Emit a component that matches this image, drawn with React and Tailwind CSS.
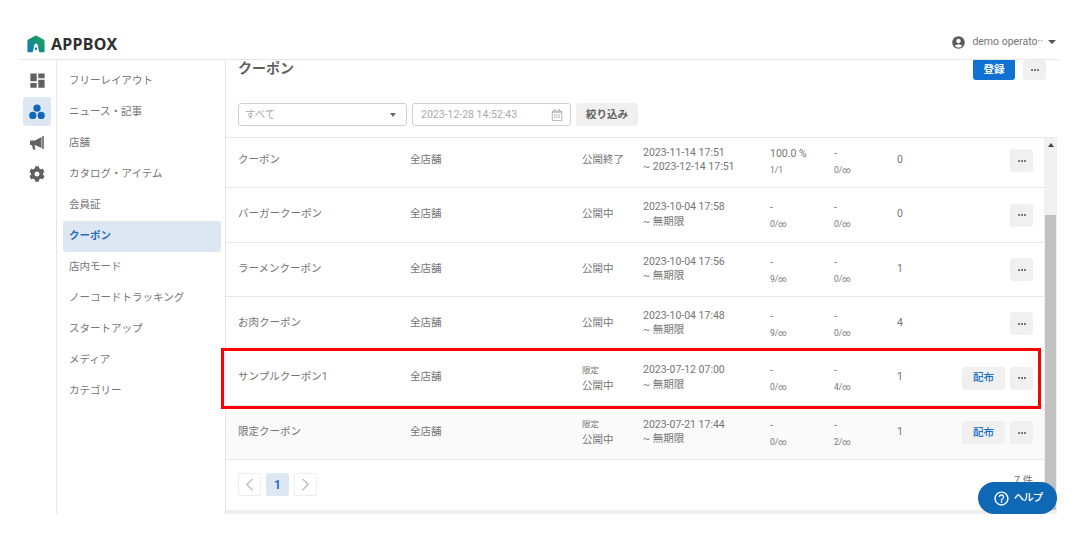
import { MdDashboard, MdAccountCircle, MdHelpOutline } from 'react-icons/md';
import { FaCog, FaRegCalendarAlt } from 'react-icons/fa';
import { ChevronLeft, ChevronRight } from 'lucide-react';

const FONT = "font-['Roboto','Noto_Sans_CJK_JP',sans-serif]";

const MENU = [
  'フリーレイアウト', 'ニュース・記事', '店舗', 'カタログ・アイテム', '会員証', 'クーポン',
  '店内モード', 'ノーコードトラッキング', 'スタートアップ', 'メディア', 'カテゴリー',
];

const ROWS = [
  { name: 'クーポン', status: '公開終了', from: '2023-11-14 17:51', to: '~ 2023-12-14 17:51', rate: '100.0 %', rateSub: '1/1', used: '0/∞', count: 0, h: 'h-[50px] pb-[4px]' },
  { name: 'バーガークーポン', status: '公開中', from: '2023-10-04 17:58', to: '~ 無期限', rate: '-', rateSub: '0/∞', used: '0/∞', count: 0, h: 'h-[55px]' },
  { name: 'ラーメンクーポン', status: '公開中', from: '2023-10-04 17:56', to: '~ 無期限', rate: '-', rateSub: '9/∞', used: '0/∞', count: 1, h: 'h-[54px]' },
  { name: 'お肉クーポン', status: '公開中', from: '2023-10-04 17:48', to: '~ 無期限', rate: '-', rateSub: '9/∞', used: '0/∞', count: 4, h: 'h-[54px]' },
  { name: 'サンプルクーポン1', limited: true, status: '公開中', from: '2023-07-12 07:00', to: '~ 無期限', rate: '-', rateSub: '0/∞', used: '4/∞', count: 1, h: 'h-[55px]' },
  { name: '限定クーポン', limited: true, status: '公開中', from: '2023-07-21 17:44', to: '~ 無期限', rate: '-', rateSub: '0/∞', used: '2/∞', count: 1, h: 'h-[54px]', shaded: true },
];

function Logo() {
  return (
    <svg width="18" height="18" viewBox="0 0 18 18">
      <defs>
        <linearGradient id="logoFill" x1="0" y1="1" x2="1" y2="0">
          <stop offset="0" stopColor="#0f78c4" />
          <stop offset="0.5" stopColor="#12917f" />
          <stop offset="1" stopColor="#2aa44f" />
        </linearGradient>
      </defs>
      <path d="M7.8 0.9 Q9 0.3 10.2 0.9 L16.6 4.4 Q17.6 5 17.6 6 V16 Q17.6 17.2 16.4 17.2 H13 Q12.2 17.2 12 16.4 L10.6 9.5 Q9 7.6 7.4 9.5 L6 16.4 Q5.8 17.2 5 17.2 H1.6 Q0.4 17.2 0.4 16 V6 Q0.4 5 1.4 4.4 Z" fill="url(#logoFill)" />
      <rect x="8" y="12.5" width="2" height="2.5" fill="#12917f" />
    </svg>
  );
}

function Cluster() {
  return (
    <svg width="16" height="16" viewBox="0 0 16 16" fill="#1366b8">
      <circle cx="8" cy="4.2" r="3.6" />
      <circle cx="3.8" cy="11.4" r="3.6" />
      <circle cx="12.2" cy="11.4" r="3.6" />
    </svg>
  );
}

function Megaphone() {
  return (
    <svg width="16" height="16" viewBox="0 0 16 16" fill="#616161">
      <path d="M1 5.5 H6 L12.5 2 V13 L6 10 H5.5 L6.5 14.5 H4 L3 10 H1 Z" />
      <rect x="13.2" y="1" width="1.6" height="13" rx="0.6" />
    </svg>
  );
}

function MoreButton({ className = '' }) {
  return (
    <button className={`w-[23px] h-[23px] rounded-[3px] bg-[#f0f0f0] flex items-center justify-center gap-[1px] ${className}`}>
      <span className="w-[2px] h-[2px] rounded-full bg-[#555]" />
      <span className="w-[2px] h-[2px] rounded-full bg-[#555]" />
      <span className="w-[2px] h-[2px] rounded-full bg-[#555]" />
    </button>
  );
}

function Row({ row }) {
  return (
    <div className={`${row.h} pl-[12px] pr-[11px] grid grid-cols-[172px_172px_61px_127px_64px_63px_1fr] items-center border-b border-[#e8e8e8] text-[10.5px] text-[#757575] ${row.shaded ? 'bg-[#fafafa]' : ''}`}>
      <div className="-mt-[2px]">{row.name}</div>
      <div className="-mt-[2px]">全店舗</div>
      <div className={row.limited ? '' : '-mt-[2px]'}>
        {row.limited && <div className="text-[8.5px] leading-[12px] mb-[3px]">限定</div>}
        <div className="leading-[14px]">{row.status}</div>
      </div>
      <div className="leading-[14.5px] -mt-[1px]">
        <div>{row.from}</div>
        <div>{row.to}</div>
      </div>
      <div className="mt-[1px]">
        <div className="leading-[14px]">{row.rate}</div>
        <div className="text-[8.5px] leading-[12px] mt-[3px]">{row.rateSub}</div>
      </div>
      <div className="mt-[1px]">
        <div className="leading-[14px]">-</div>
        <div className="text-[8.5px] leading-[12px] mt-[3px]">{row.used}</div>
      </div>
      <div className="flex items-center justify-between">
        <span className="-mt-[2px]">{row.count}</span>
        <div className="flex items-center gap-[5px]">
          {row.limited && (
            <button className="w-[43px] h-[23px] rounded-[3px] bg-[#f0f0f0] text-[10.5px] font-medium text-[#1a6fc4]">配布</button>
          )}
          <MoreButton />
        </div>
      </div>
    </div>
  );
}

export default function App() {
  return (
    <div className={`${FONT} relative w-[1079px] h-[535px] bg-white overflow-hidden`}>
      {/* Header */}
      <header className="h-[60px] ml-[20px] w-[1039px] border-b border-[#e6e6e6] flex items-end justify-between pb-[6px] pl-[7px] pr-[3px]">
        <div className="flex items-center gap-[6px]">
          <Logo />
          <span className="font-['Noto_Sans',sans-serif] text-[16px] leading-[18px] font-bold text-[#2f2f2f] tracking-[0.3px]">APPBOX</span>
        </div>
        <div className="flex items-center text-[10.5px] text-[#757575] mb-[3px]">
          <MdAccountCircle size={15} className="text-[#5c5c5c] mr-[6px]" />
          <span>demo operato··</span>
          <span className="ml-[5px] w-0 h-0 border-x-[4px] border-x-transparent border-t-[4px] border-t-[#555]" />
        </div>
      </header>

      <div className="flex ml-[20px] w-[1039px] h-[454px]">
        {/* Icon rail */}
        <nav className="w-[37px] border-r border-[#e6e6e6] pt-[5px] pr-[2px] flex flex-col items-center shrink-0">
          <div className="w-[28px] h-[31px] flex items-center justify-center">
            <MdDashboard size={19} className="text-[#616161]" />
          </div>
          <div className="w-[28px] h-[29px] my-[1px] rounded-[3px] bg-[#dce7f3] flex items-center justify-center">
            <Cluster />
          </div>
          <div className="w-[28px] h-[31px] flex items-center justify-center">
            <Megaphone />
          </div>
          <div className="w-[28px] h-[31px] flex items-center justify-center">
            <FaCog size={16} className="text-[#616161]" />
          </div>
        </nav>

        {/* Menu */}
        <aside className="w-[169px] shrink-0 border-r border-[#e6e6e6] pt-[6px] pl-[6px] pr-[4px]">
          {MENU.map((label) => (
            <div
              key={label}
              className={`h-[31px] pl-[6px] pb-[1px] flex items-center rounded-[3px] text-[10.5px] ${label === 'クーポン' ? 'bg-[#dce7f3] text-[#2a6cb5] font-bold' : 'text-[#757575]'}`}
            >
              {label}
            </div>
          ))}
        </aside>

        {/* Main */}
        <main className="w-[833px] flex flex-col">
          <div className="h-[78px] shrink-0 border-b border-[#e8e8e8] pl-[12px] pr-[13px] flex flex-col">
            <div className="flex items-start justify-between h-[43px]">
              <h1 className="text-[14px] leading-[18px] font-bold text-[#616161] mt-[-1px]">クーポン</h1>
              <div className="flex items-start gap-[8px]">
                <button className="w-[42px] h-[20px] rounded-b-[3px] bg-[#1272d3] text-white text-[10.5px] font-bold">登録</button>
                <MoreButton className="!h-[20px]" />
              </div>
            </div>
            <div className="flex items-center gap-[5px]">
              <div className="w-[169px] h-[23px] border border-[#cfcfcf] rounded-[3px] pl-[6px] pr-[10px] flex items-center justify-between">
                <span className="text-[10.5px] text-[#aaa]">すべて</span>
                <span className="w-0 h-0 border-x-[3px] border-x-transparent border-t-[4px] border-t-[#666]" />
              </div>
              <div className="w-[159px] h-[23px] border border-[#cfcfcf] rounded-[3px] pl-[8px] pr-[7px] flex items-center justify-between">
                <span className="text-[10.5px] text-[#aaa]">2023-12-28 14:52:43</span>
                <FaRegCalendarAlt size={12} className="text-[#bbb]" />
              </div>
              <button className="w-[62px] h-[23px] rounded-[3px] bg-[#f0f0f0] text-[10.5px] font-bold text-[#616161]">絞り込み</button>
            </div>
          </div>

          <div className="flex flex-1 min-h-0">
            <div className="w-[818px] shrink-0 flex flex-col">
              {ROWS.map((row) => (
                <Row key={row.name} row={row} />
              ))}
              <div className="flex-1 flex items-start justify-between pl-[12px] pr-[11px] pt-[13px] border-b-[4px] border-[#eeeeee]">
                <div className="flex items-center gap-[5px]">
                  <button className="w-[23px] h-[23px] border border-[#eeeeee] rounded-[2px] flex items-center justify-center text-[#bdbdbd]">
                    <ChevronLeft size={21} strokeWidth={1.5} />
                  </button>
                  <button className="w-[23px] h-[23px] rounded-[2px] bg-[#dce7f3] text-[#2a6cb5] text-[12px] font-bold">1</button>
                  <button className="w-[23px] h-[23px] border border-[#eeeeee] rounded-[2px] flex items-center justify-center text-[#bdbdbd]">
                    <ChevronRight size={21} strokeWidth={1.5} />
                  </button>
                </div>
                <span className="text-[10.5px] text-[#757575]">7 件</span>
              </div>
            </div>
            {/* Scrollbar */}
            <div className="w-[13px] shrink-0 bg-[#f1f1f1] border-b-[4px] border-[#eeeeee] flex flex-col items-center">
              <span className="mt-[5px] w-0 h-0 border-x-[3px] border-x-transparent border-b-[4px] border-b-[#444]" />
              <div className="mt-[68px] w-[11px] flex-1 bg-[#c1c1c1]" />
            </div>
          </div>
        </main>
      </div>

      {/* Highlight */}
      <div className="absolute left-[221px] top-[348px] w-[820px] h-[61px] border-[3px] border-[#ff0000]" />

      {/* Help */}
      <button className="absolute left-[978px] top-[482px] w-[79px] h-[32px] rounded-full bg-[#0f68b4] text-white flex items-center justify-center gap-[4px] text-[10.5px] font-medium tracking-[-1px]">
        <MdHelpOutline size={17} />
        ヘルプ
      </button>
    </div>
  );
}
